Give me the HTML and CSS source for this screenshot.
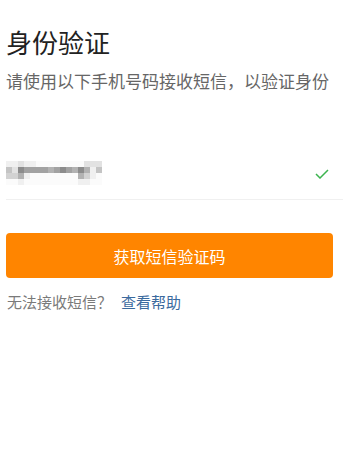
FILE: index.html
```html
<!DOCTYPE html>
<html>
<head>
    <meta charset="utf-8">
    <title>身份验证</title>
    <link rel="stylesheet" href="styles.css">
</head>
<body>
    <div class="page">
        <h1 class="title">身份验证</h1>
        <p class="subtitle">请使用以下手机号码接收短信，以验证身份</p>

        <div class="phone-row">
            <!-- blurred phone number -->
            <div class="mosaic">
                <span class="c1"></span><span class="c1"></span><span class="c2"></span><span class="c1"></span><span class="c1"></span><span class="c0"></span><span class="c0"></span><span class="c0"></span><span class="c0"></span><span class="c0"></span><span class="c0"></span><span class="c0"></span><span class="c0"></span><span class="c2"></span><span class="c2"></span><span class="c2"></span>
                <span class="c4"></span><span class="c2"></span><span class="c7"></span><span class="c6"></span><span class="c6"></span><span class="c6"></span><span class="c6"></span><span class="c5"></span><span class="c6"></span><span class="c7"></span><span class="c6"></span><span class="c5"></span><span class="c7"></span><span class="c5"></span><span class="c1"></span><span class="c4"></span>
                <span class="c3"></span><span class="c3"></span><span class="c5"></span><span class="c1"></span><span class="c0"></span><span class="c0"></span><span class="c0"></span><span class="c0"></span><span class="c0"></span><span class="c0"></span><span class="c0"></span><span class="c0"></span><span class="c5"></span><span class="c3"></span><span class="c1"></span><span class="c0"></span>
                <span class="c0"></span><span class="c0"></span><span class="c1"></span><span class="c0"></span><span class="c0"></span><span class="c0"></span><span class="c0"></span><span class="c0"></span><span class="c0"></span><span class="c0"></span><span class="c0"></span><span class="c0"></span><span class="c1"></span><span class="c1"></span><span class="c0"></span><span class="c0"></span>
            </div>
            <svg class="check" width="14" height="10" viewBox="0 0 14 10">
                <path d="M1 5 L5 9 L13 1" fill="none" stroke="#3cb44f" stroke-width="1.5"/>
            </svg>
        </div>

        <button class="btn">获取短信验证码</button>

        <p class="help">无法接收短信？<a class="help-link" href="#">查看帮助</a></p>
    </div>
</body>
</html>
```

FILE: styles.css
```css
body {
    margin: 0;
    background: #fff;
    font-family: "Noto Sans CJK SC", "Noto Sans", sans-serif;
}
.page {
    padding: 22px 0 0 6px;
}
.title {
    margin: 0;
    font-size: 26px;
    font-weight: normal;
    line-height: 40px;
    color: #222;
}
.subtitle {
    margin: 7px 0 0 0;
    font-size: 17px;
    line-height: 24px;
    color: #666;
    white-space: nowrap;
}
.phone-row {
    margin-top: 62px;
    display: flex;
    align-items: center;
    justify-content: space-between;
    height: 36px;
    padding-right: 14px;
    border-bottom: 1px solid #f0f0f0;
    padding-bottom: 8px;
}
.mosaic {
    display: grid;
    grid-template-columns: repeat(16, 6px);
    grid-auto-rows: 6px;
}
.c0 { background: #fbfbfb; }
.c1 { background: #f0f0f0; }
.c2 { background: #e2e2e2; }
.c3 { background: #d2d2d2; }
.c4 { background: #c4c4c4; }
.c5 { background: #b2b2b2; }
.c6 { background: #a2a2a2; }
.c7 { background: #8c8c8c; }
.check {
    margin-top: 2px;
}
.btn {
    display: block;
    margin-top: 33px;
    width: 327px;
    height: 45px;
    border: none;
    border-radius: 4px;
    background: #ff8500;
    color: #fff;
    font-family: "Noto Sans CJK SC", "Noto Sans", sans-serif;
    font-size: 16px;
}
.help {
    margin: 12px 0 0 1px;
    font-size: 15px;
    line-height: 24px;
    color: #7a7a7a;
}
.help-link {
    color: #3b6a9e;
    text-decoration: none;
    margin-left: 9px;
}
```
